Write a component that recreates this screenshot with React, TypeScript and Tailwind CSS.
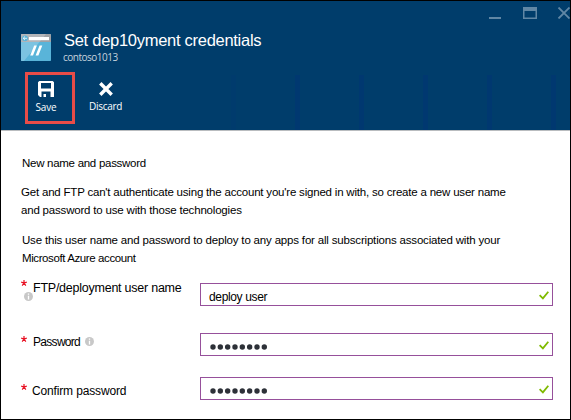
import type { ReactNode } from "react";

const FONT = "font-['Liberation_Sans',Arial,sans-serif]";
const OPEN = "font-['Open_Sans',sans-serif]";

function AppIcon() {
  return (
    <svg width="30" height="27" viewBox="0 0 30 27" className="mt-[33px] shrink-0">
      <rect width="30" height="27" rx="0.8" fill="#59b4d9" />
      <path d="M0 8V1Q0 0 1 0H29Q30 0 30 1V8Z" fill="#9fa1a5" />
      <path d="M0 8V1Q0 0 1 0H25L18.5 8Z" fill="#b3b5b9" />
      <path d="M0 8H18.5L3 27H1Q0 27 0 26Z" fill="#7cc3e1" />
      <rect x="8" y="3" width="20" height="3.2" fill="#fff" />
      <circle cx="4" cy="4.3" r="2.9" fill="#59b4d9" />
      <path d="M6 4.3H2.3M4 2.5L2.2 4.3L4 6.1" stroke="#fff" strokeWidth="0.8" fill="none" />
      <path d="M13.2 11.4H15.9L12 21.6H9.2ZM18.6 11.4H21.3L17.4 21.6H14.6Z" fill="#fff" />
    </svg>
  );
}

function SaveIcon() {
  return (
    <svg width="16" height="16" viewBox="0 0 16 16" className="shrink-0">
      <path d="M1.3 0H14.7L16 1.3V16H2L0 14V1.3Z" fill="#fff" />
      <path d="M3 2H13V7.5H3ZM3.5 10.5H12.5V16H3.5Z" fill="#003d6b" />
      <path d="M5.5 13H8V16H5.5Z" fill="#fff" />
    </svg>
  );
}

function Info({ className }: { className: string }) {
  return (
    <svg width="9" height="9" viewBox="0 0 9 9" className={className}>
      <circle cx="4.5" cy="4.5" r="4.5" fill="#c8c8c8" />
      <path d="M4.5 1.5V2.8M4.5 3.8V7.4" stroke="#fff" strokeWidth="1.3" />
    </svg>
  );
}

function Field({ children, className }: { children: ReactNode; className: string }) {
  return (
    <div className={`flex h-[23px] w-[353px] shrink-0 justify-between border border-[#96509b] pr-[3px] pl-2 ${className}`}>
      {children}
      <svg width="10" height="9" viewBox="0 0 10 9" className="mt-[7px]">
        <path d="M0.6 4.2L3.9 7.4L9.3 0.8" fill="none" stroke="#7fba00" strokeWidth="1.8" />
      </svg>
    </div>
  );
}

function Dots() {
  return (
    <svg width="58" height="6" viewBox="0 0 58 6" className="mt-[9.5px] ml-px">
      {[0, 1, 2, 3, 4, 5, 6, 7].map((i) => (
        <circle key={i} cx={3 + i * 7.33} cy="3" r="2.7" fill="#2d3138" />
      ))}
    </svg>
  );
}

function Star({ className }: { className: string }) {
  return (
    <svg width="6" height="6" viewBox="0 0 6 6" className={`ml-5 shrink-0 ${className}`}>
      <path d="M3 3V0M3 3L0.2 2.1M3 3L5.8 2.1M3 3L1.2 5.6M3 3L4.8 5.6" stroke="#e81123" strokeWidth="1.2" />
    </svg>
  );
}

export default function App() {
  return (
    <div className={`flex h-[420px] w-[571px] flex-col overflow-hidden border border-black bg-white text-black ${FONT}`}>
      <header className="flex h-[130px] shrink-0 flex-col border-b border-[#b9bcbf] bg-[#003d6b] text-white">
        <div className="flex h-[70px] pl-5">
          <AppIcon />
          <div className="flex flex-1 flex-col whitespace-nowrap pt-[27px] pl-[13px]">
            <h1 className="h-[23px] text-[16.5px] leading-6 tracking-[-0.28px]">Set dep10yment credentials</h1>
            <p className={`-ml-px h-3 text-[10px] leading-3 tracking-[-0.5px] text-[#c5d2dd] ${OPEN}`}>contoso1013</p>
          </div>
          <svg width="81" height="12" viewBox="0 0 81 12" className="mt-[6px] shrink-0" fill="none" stroke="#6087a5">
            <path d="M0 11H12" strokeWidth="2" />
            <path d="M34 0H48V12H34ZM35.5 4V10.5H46.5V4Z" fill="#6087a5" fillRule="evenodd" stroke="none" />
            <path d="M69.5 0.5L80.5 11.5M80.5 0.5L69.5 11.5" strokeWidth="1.8" />
          </svg>
        </div>
        <div className="flex flex-1">
          <button className={`ml-6 mt-px flex h-[52px] w-[50px] flex-col items-center border-3 border-[#e84c48] pt-[6px] pr-[8px] text-[10px] leading-3 tracking-[-0.2px] ${OPEN}`}>
            <SaveIcon />
            <span className="mt-[4px]">Save</span>
          </button>
          <button className={`ml-[13px] flex h-[52px] w-[35px] flex-col items-center pt-[11px] text-[10px] leading-3 tracking-[-0.3px] ${OPEN}`}>
            <svg width="14" height="14" viewBox="0 0 14 14" className="shrink-0">
              <path d="M1.3 1.3L12.7 12.7M12.7 1.3L1.3 12.7" stroke="#fff" strokeWidth="3.4" />
            </svg>
            <span className="mt-[4px]">Discard</span>
          </button>
          <div className="mt-1 ml-[108px] flex gap-[59px]">
            {[0, 1, 2, 3, 4, 5].map((i) => (
              <span key={i} className={i === 0 ? "w-[5px] bg-[#003b6d]" : "w-[5px] bg-[#003870]"} />
            ))}
          </div>
        </div>
      </header>
      <main className="flex flex-1 flex-col whitespace-nowrap text-[11.5px] leading-[18px]">
        <p className="mt-[23px] ml-[21px] tracking-[-0.28px]">New name and password</p>
        <p className="mt-[11px] ml-5 tracking-[-0.2px]">Get and FTP can't authenticate using the account you're signed in with, so create a new user name</p>
        <p className="ml-5 tracking-[-0.19px]">and password to use with those technologies</p>
        <p className="mt-3 ml-[21px] tracking-[-0.18px]">Use this user name and password to deploy to any apps for all subscriptions associated with your</p>
        <p className="ml-[21px] tracking-[-0.4px]">Microsoft Azure account</p>
        <div className="flex h-[50px] text-[12px]">
          <Star className="mt-[13px]" />
          <Info className="-ml-[3px] mt-[25px]" />
          <div className="w-[167px] pt-[12px] text-[12.5px] tracking-[-0.24px]">FTP/deployment user name</div>
          <Field className="mt-[16px]"><span className="pt-[4px] tracking-[-0.35px]">deploy user</span></Field>
        </div>
        <div className="flex h-[50px] text-[12px]">
          <Star className="mt-[19px]" />
          <div className="flex w-[173px] pt-[16px] pl-[6px]"><span className="tracking-[-0.7px]">Password</span><Info className="mt-[4px] ml-[5px]" /></div>
          <Field className="mt-[16px]"><Dots /></Field>
        </div>
        <div className="flex h-[50px] text-[12px]">
          <Star className="mt-[17px]" />
          <div className="w-[173px] pt-[15px] pl-[5px] tracking-[-0.15px]">Confirm password</div>
          <Field className="mt-[10px]"><Dots /></Field>
        </div>
      </main>
    </div>
  );
}
